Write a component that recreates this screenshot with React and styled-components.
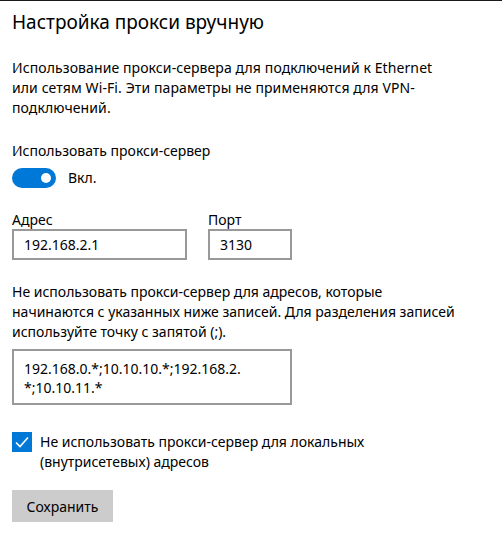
import React from "react";
import styled, { createGlobalStyle } from "styled-components";

const Global = createGlobalStyle`
  html, body { margin: 0; padding: 0; background: #fff; }
  body { font-family: "Segoe UI", "Noto Sans", "Open Sans", sans-serif; color: #000; }
  * { box-sizing: border-box; }
`;

const Page = styled.div`
  width: 502px;
  height: 545px;
  border-top: 1px solid #1a1a1a;
  padding: 7px 12px 0 12px;
  display: flex;
  flex-direction: column;
  font-size: 14px;
`;

const Title = styled.h1`
  margin: 0;
  font-size: 19px;
  font-weight: 400;
  line-height: 28px;
`;

const Para = styled.p`
  margin: ${(p) => p.$mt || 0}px 0 0 0;
  font-size: 14px;
  line-height: 20px;
  letter-spacing: ${(p) => p.$ls || 0}px;
  width: ${(p) => p.$w || 440}px;
`;

const Label = styled.div`
  margin-top: ${(p) => p.$mt || 0}px;
  font-size: 14px;
  line-height: 20px;
`;

const ToggleRow = styled.div`
  display: flex;
  align-items: center;
  gap: 12px;
  margin-top: 6px;
  height: 21px;
`;

const Toggle = styled.div`
  width: 44px;
  height: 20px;
  border-radius: 10px;
  background: #0078d7;
  display: flex;
  align-items: center;
  justify-content: flex-end;
  padding-right: 5px;
`;

const Knob = styled.div`
  width: 10px;
  height: 10px;
  border-radius: 50%;
  background: #fff;
`;

const Fields = styled.div`
  display: flex;
  gap: 21px;
  margin-top: 23px;
`;

const Field = styled.div`
  display: flex;
  flex-direction: column;
  gap: 0;
`;

const FieldLabel = styled.div`
  font-size: 14px;
  line-height: 18px;
`;

const Input = styled.div`
  width: ${(p) => p.$w}px;
  height: ${(p) => p.$h || 31}px;
  margin-top: ${(p) => p.$mt || 0}px;
  border: 2px solid #999;
  padding: ${(p) => p.$pt || 4}px 10px 0 10px;
  font-size: 14px;
  line-height: 19px;
`;

const CheckRow = styled.div`
  display: flex;
  gap: 8px;
  margin-top: 27px;
`;

const Box = styled.div`
  width: 20px;
  height: 20px;
  background: #0078d7;
  flex: none;
  display: flex;
  align-items: center;
  justify-content: center;
`;

const CheckText = styled.div`
  font-size: 14px;
  line-height: 20px;
`;

const Button = styled.button`
  margin-top: 18px;
  width: 101px;
  height: 32px;
  border: none;
  background: #cccccc;
  font-family: inherit;
  font-size: 14px;
  color: #000;
  padding: 0;
`;

export default function App() {
  return (
    <>
      <Global />
      <Page>
        <Title>Настройка прокси вручную</Title>
        <Para $mt={22} $ls={0.1} $w={430}>
          Использование прокси-сервера для подключений к Ethernet или сетям Wi-Fi. Эти параметры не применяются для VPN-подключений.
        </Para>
        <Label $mt={23}>Использовать прокси-сервер</Label>
        <ToggleRow>
          <Toggle><Knob /></Toggle>
          <span>Вкл.</span>
        </ToggleRow>
        <Fields>
          <Field>
            <FieldLabel>Адрес</FieldLabel>
            <Input $w={175}>192.168.2.1</Input>
          </Field>
          <Field>
            <FieldLabel>Порт</FieldLabel>
            <Input $w={84}>3130</Input>
          </Field>
        </Fields>
        <Para $mt={22} $w={450}>
          Не использовать прокси-сервер для адресов, которые начинаются с указанных ниже записей. Для разделения записей используйте точку с запятой (;).
        </Para>
        <Input $w={280} $h={56} $pt={8} $mt={7}>
          192.168.0.*;10.10.10.*;192.168.2.
          <br />
          *;10.10.11.*
        </Input>
        <CheckRow>
          <Box>
            <svg width="14" height="12" viewBox="0 0 14 12">
              <path d="M1 6.5 L5 10.5 L13 1.5" fill="none" stroke="#fff" strokeWidth="1.6" />
            </svg>
          </Box>
          <CheckText>
            Не использовать прокси-сервер для локальных
            <br />
            (внутрисетевых) адресов
          </CheckText>
        </CheckRow>
        <Button>Сохранить</Button>
      </Page>
    </>
  );
}
